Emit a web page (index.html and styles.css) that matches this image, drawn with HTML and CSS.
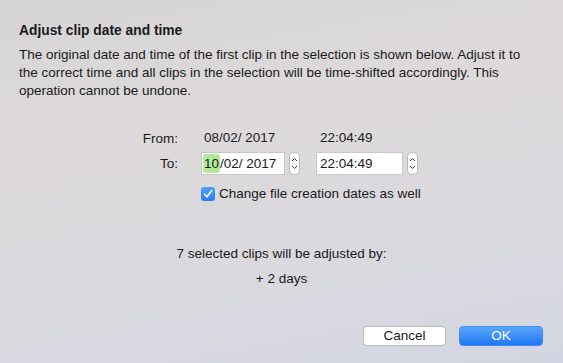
FILE: index.html
```html
<!DOCTYPE html>
<html lang="en">
<head>
  <meta charset="UTF-8">
  <title>Adjust clip date and time</title>
  <link rel="stylesheet" href="styles.css">
</head>
<body>
  <div class="dialog">
    <div class="heading">Adjust clip date and time</div>
    <p class="intro">The original date and time of the first clip in the selection is shown below. Adjust it to the correct time and all clips in the selection will be time-shifted accordingly. This operation cannot be undone.</p>

    <div class="dates">
      <div class="label">From:</div>
      <div class="value date">08/02/ 2017</div>
      <div class="value time">22:04:49</div>

      <div class="label">To:</div>
      <div class="field-wrap">
        <div class="field date"><span class="sel">10</span>/02/ 2017</div>
        <div class="stepper">
          <svg viewBox="0 0 11 23" width="11" height="23">
            <rect x="0.5" y="0.5" width="10" height="22" rx="4" fill="#fff" stroke="#b9b9b9"/>
            <path d="M3 9 L5.5 6.5 L8 9" fill="none" stroke="#333" stroke-width="1"/>
            <path d="M3 14 L5.5 16.5 L8 14" fill="none" stroke="#333" stroke-width="1"/>
          </svg>
        </div>
      </div>
      <div class="field-wrap">
        <div class="field time">22:04:49</div>
        <div class="stepper">
          <svg viewBox="0 0 11 23" width="11" height="23">
            <rect x="0.5" y="0.5" width="10" height="22" rx="4" fill="#fff" stroke="#b9b9b9"/>
            <path d="M3 9 L5.5 6.5 L8 9" fill="none" stroke="#333" stroke-width="1"/>
            <path d="M3 14 L5.5 16.5 L8 14" fill="none" stroke="#333" stroke-width="1"/>
          </svg>
        </div>
      </div>

      <div></div>
      <div class="check-row">
        <span class="checkbox">
          <svg viewBox="0 0 14 14" width="14" height="14">
            <path d="M3.5 7.2 L6 9.8 L10.8 3.6" fill="none" stroke="#fff" stroke-width="1.6" stroke-linecap="round" stroke-linejoin="round"/>
          </svg>
        </span>
        Change file creation dates as well
      </div>
    </div>

    <div class="summary">
      <div>7 selected clips will be adjusted by:</div>
      <div class="shift">+ 2 days</div>
    </div>

    <div class="buttons">
      <div class="btn cancel">Cancel</div>
      <div class="btn ok">OK</div>
    </div>
  </div>
</body>
</html>
```

FILE: styles.css
```css
html, body {
  margin: 0;
  height: 100%;
}

body {
  font-family: "Liberation Sans", Arial, sans-serif;
  font-size: 13.5px;
  color: #1a1a1a;
  background: linear-gradient(170deg, #d6d4d6 0%, #dedadb 35%, #dad9de 65%, #d3d6e2 100%);
}

.dialog {
  padding: 22px 19px 0 19px;
}

.heading {
  font-weight: bold;
  font-size: 13.8px;
  line-height: 17px;
}

.intro {
  margin: 7px 0 0 0;
  line-height: 18px;
  padding-right: 22px;
}

.dates {
  display: grid;
  grid-template-columns: 66px 115px auto;
  row-gap: 6px;
  margin: 30px 0 0 116px;
  align-items: center;
}

.label {
  text-align: right;
  padding-right: 23px;
}

.value {
  line-height: 16px;
}

.value.date {
  padding-left: 3px;
}

.value.time {
  padding-left: 4px;
}

.field-wrap {
  display: flex;
  align-items: center;
  gap: 4px;
}

.field {
  background: #fff;
  border: 1px solid #c8c8c8;
  height: 21px;
  line-height: 21px;
  padding: 0 2px;
  box-sizing: content-box;
}

.field.date {
  width: 78px;
}

.field.time {
  width: 81px;
  padding-left: 3px;
  padding-right: 1px;
}

.sel {
  display: inline-block;
  height: 19px;
  line-height: 19px;
  vertical-align: top;
  margin-top: 1px;
  background: #b4e89a;
  border-radius: 3px;
  padding: 0 1px;
  margin-left: -1px;
}

.stepper {
  display: flex;
}

.check-row {
  grid-column: 2 / 4;
  display: flex;
  align-items: center;
  gap: 4px;
  margin-top: 5px;
}

.checkbox {
  display: inline-flex;
  width: 14px;
  height: 14px;
  border-radius: 3px;
  background: linear-gradient(#4da0f7, #2a7cf0);
}

.summary {
  text-align: center;
  margin-top: 45px;
  line-height: 16px;
}

.shift {
  margin-top: 9px;
}

.buttons {
  display: flex;
  justify-content: flex-end;
  gap: 13px;
  margin-top: 39px;
  padding-right: 1px;
}

.btn {
  width: 83px;
  height: 20px;
  line-height: 20px;
  text-align: center;
  border-radius: 4px;
  box-sizing: border-box;
}

.cancel {
  background: #fff;
  border: 1px solid #b9b9bd;
  line-height: 18px;
}

.ok {
  width: 84px;
  color: #fff;
  background: linear-gradient(#5aa6fb, #1f78f5);
  border: 1px solid #3e8cf4;
  line-height: 18px;
}
```
